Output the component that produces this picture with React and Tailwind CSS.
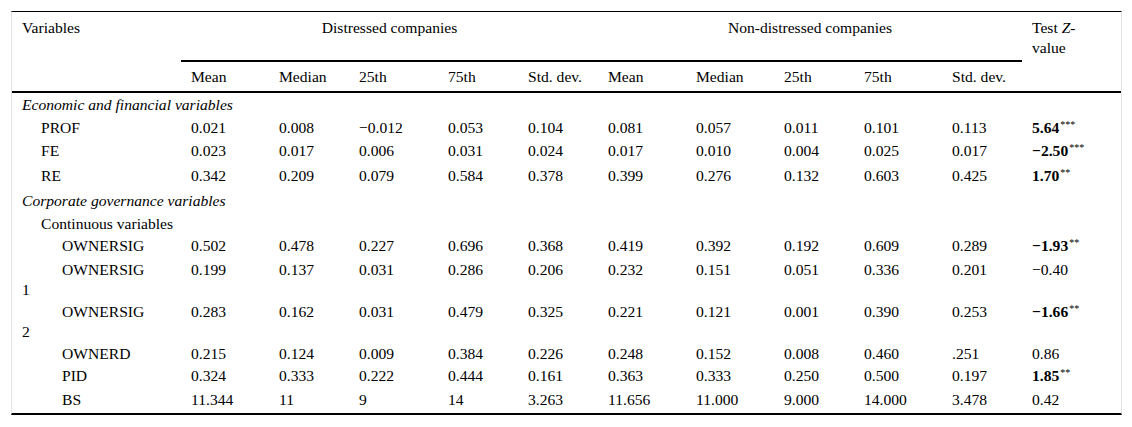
import React from "react";

const grid =
  "grid grid-cols-[169px_88px_80px_89px_80px_80px_88px_88px_80px_88px_80px_99px]";

const rows = [
  { section: "Economic and financial variables", h: "h-[23px]" },
  {
    label: ["PROF"], ind: "indent-[19px]", h: "h-[23px]",
    v: ["0.021", "0.008", "\u22120.012", "0.053", "0.104", "0.081", "0.057", "0.011", "0.101", "0.113"],
    t: "5.64", b: true, s: "***",
  },
  {
    label: ["FE"], ind: "indent-[19px]", h: "h-[24px]",
    v: ["0.023", "0.017", "0.006", "0.031", "0.024", "0.017", "0.010", "0.004", "0.025", "0.017"],
    t: "\u22122.50", b: true, s: "***",
  },
  {
    label: ["RE"], ind: "indent-[19px]", h: "h-[26px]",
    v: ["0.342", "0.209", "0.079", "0.584", "0.378", "0.399", "0.276", "0.132", "0.603", "0.425"],
    t: "1.70", b: true, s: "**",
  },
  { section: "Corporate governance variables", h: "h-[24px]" },
  { label: ["Continuous variables"], ind: "indent-[19px]", h: "h-[21px]", v: null },
  {
    label: ["OWNERSIG"], ind: "indent-[40px]", h: "h-[23px]",
    v: ["0.502", "0.478", "0.227", "0.696", "0.368", "0.419", "0.392", "0.192", "0.609", "0.289"],
    t: "\u22121.93", b: true, s: "**",
  },
  {
    label: ["OWNERSIG", "1"], ind: "indent-[40px]", h: "h-[43px]", top: "pt-[3px]",
    v: ["0.199", "0.137", "0.031", "0.286", "0.206", "0.232", "0.151", "0.051", "0.336", "0.201"],
    t: "\u22120.40", b: false,
  },
  {
    label: ["OWNERSIG", "2"], ind: "indent-[40px]", h: "h-[43px]", top: "pt-[2px]",
    v: ["0.283", "0.162", "0.031", "0.479", "0.325", "0.221", "0.121", "0.001", "0.390", "0.253"],
    t: "\u22121.66", b: true, s: "**",
  },
  {
    label: ["OWNERD"], ind: "indent-[40px]", h: "h-[21px]",
    v: ["0.215", "0.124", "0.009", "0.384", "0.226", "0.248", "0.152", "0.008", "0.460", ".251"],
    t: "0.86", b: false,
  },
  {
    label: ["PID"], ind: "indent-[40px]", h: "h-[23px]",
    v: ["0.324", "0.333", "0.222", "0.444", "0.161", "0.363", "0.333", "0.250", "0.500", "0.197"],
    t: "1.85", b: true, s: "**",
  },
  {
    label: ["BS"], ind: "indent-[40px]", h: "h-[26px]",
    v: ["11.344", "11", "9", "14", "3.263", "11.656", "11.000", "9.000", "14.000", "3.478"],
    t: "0.42", b: false,
  },
];

const subs = ["Mean", "Median", "25th", "75th", "Std. dev.", "Mean", "Median", "25th", "75th", "Std. dev."];

function BodyRow({ r }) {
  if (r.section) {
    return (
      <div className={`${r.h} flex items-center pl-[10px] italic`}>{r.section}</div>
    );
  }
  const align = r.top ? `items-start ${r.top}` : "items-center";
  return (
    <div className={`${grid} ${r.h} ${align}`}>
      <div className={`pl-[10px] ${r.ind}`}>
        {r.label.map((l, i) => (
          <React.Fragment key={i}>
            {i > 0 && <br />}
            {l}
          </React.Fragment>
        ))}
      </div>
      {r.v &&
        r.v.map((x, i) => (
          <div key={i} className="pl-[10px] whitespace-nowrap">
            {x}
          </div>
        ))}
      {r.v && (
        <div className="pl-[10px] whitespace-nowrap">
          <span className={r.b ? "font-bold" : ""}>{r.t}</span>
          {r.s && <sup className="text-[10px] ml-[1px]">{r.s}</sup>}
        </div>
      )}
    </div>
  );
}

export default function App() {
  return (
    <div className="bg-white w-[1132px] h-[427px] pt-[11px] pl-[11px] [font-family:'Liberation_Serif',serif] text-[15.6px] leading-[20px] text-black">
      <div className="w-[1111px] border-x border-x-[#e3e3e3] border-t border-t-black border-b-2 border-b-black">
        {/* header */}
        <div className={`${grid} border-b-2 border-black`}>
          <div className="row-span-2 pl-[10px] pt-[6px]">Variables</div>
          <div className="col-span-5 h-[50px] border-b-2 border-black pt-[6px] text-center">
            Distressed companies
          </div>
          <div className="col-span-5 h-[50px] border-b-2 border-black pt-[6px] text-center">
            Non-distressed companies
          </div>
          <div className="row-span-2 pl-[10px] pt-[6px]">
            Test <i>Z</i>-<br />value
          </div>
          {subs.map((s, i) => (
            <div key={i} className="h-[29px] flex items-center pl-[10px] whitespace-nowrap">
              {s}
            </div>
          ))}
        </div>
        {/* body */}
        {rows.map((r, i) => (
          <BodyRow key={i} r={r} />
        ))}
      </div>
    </div>
  );
}
